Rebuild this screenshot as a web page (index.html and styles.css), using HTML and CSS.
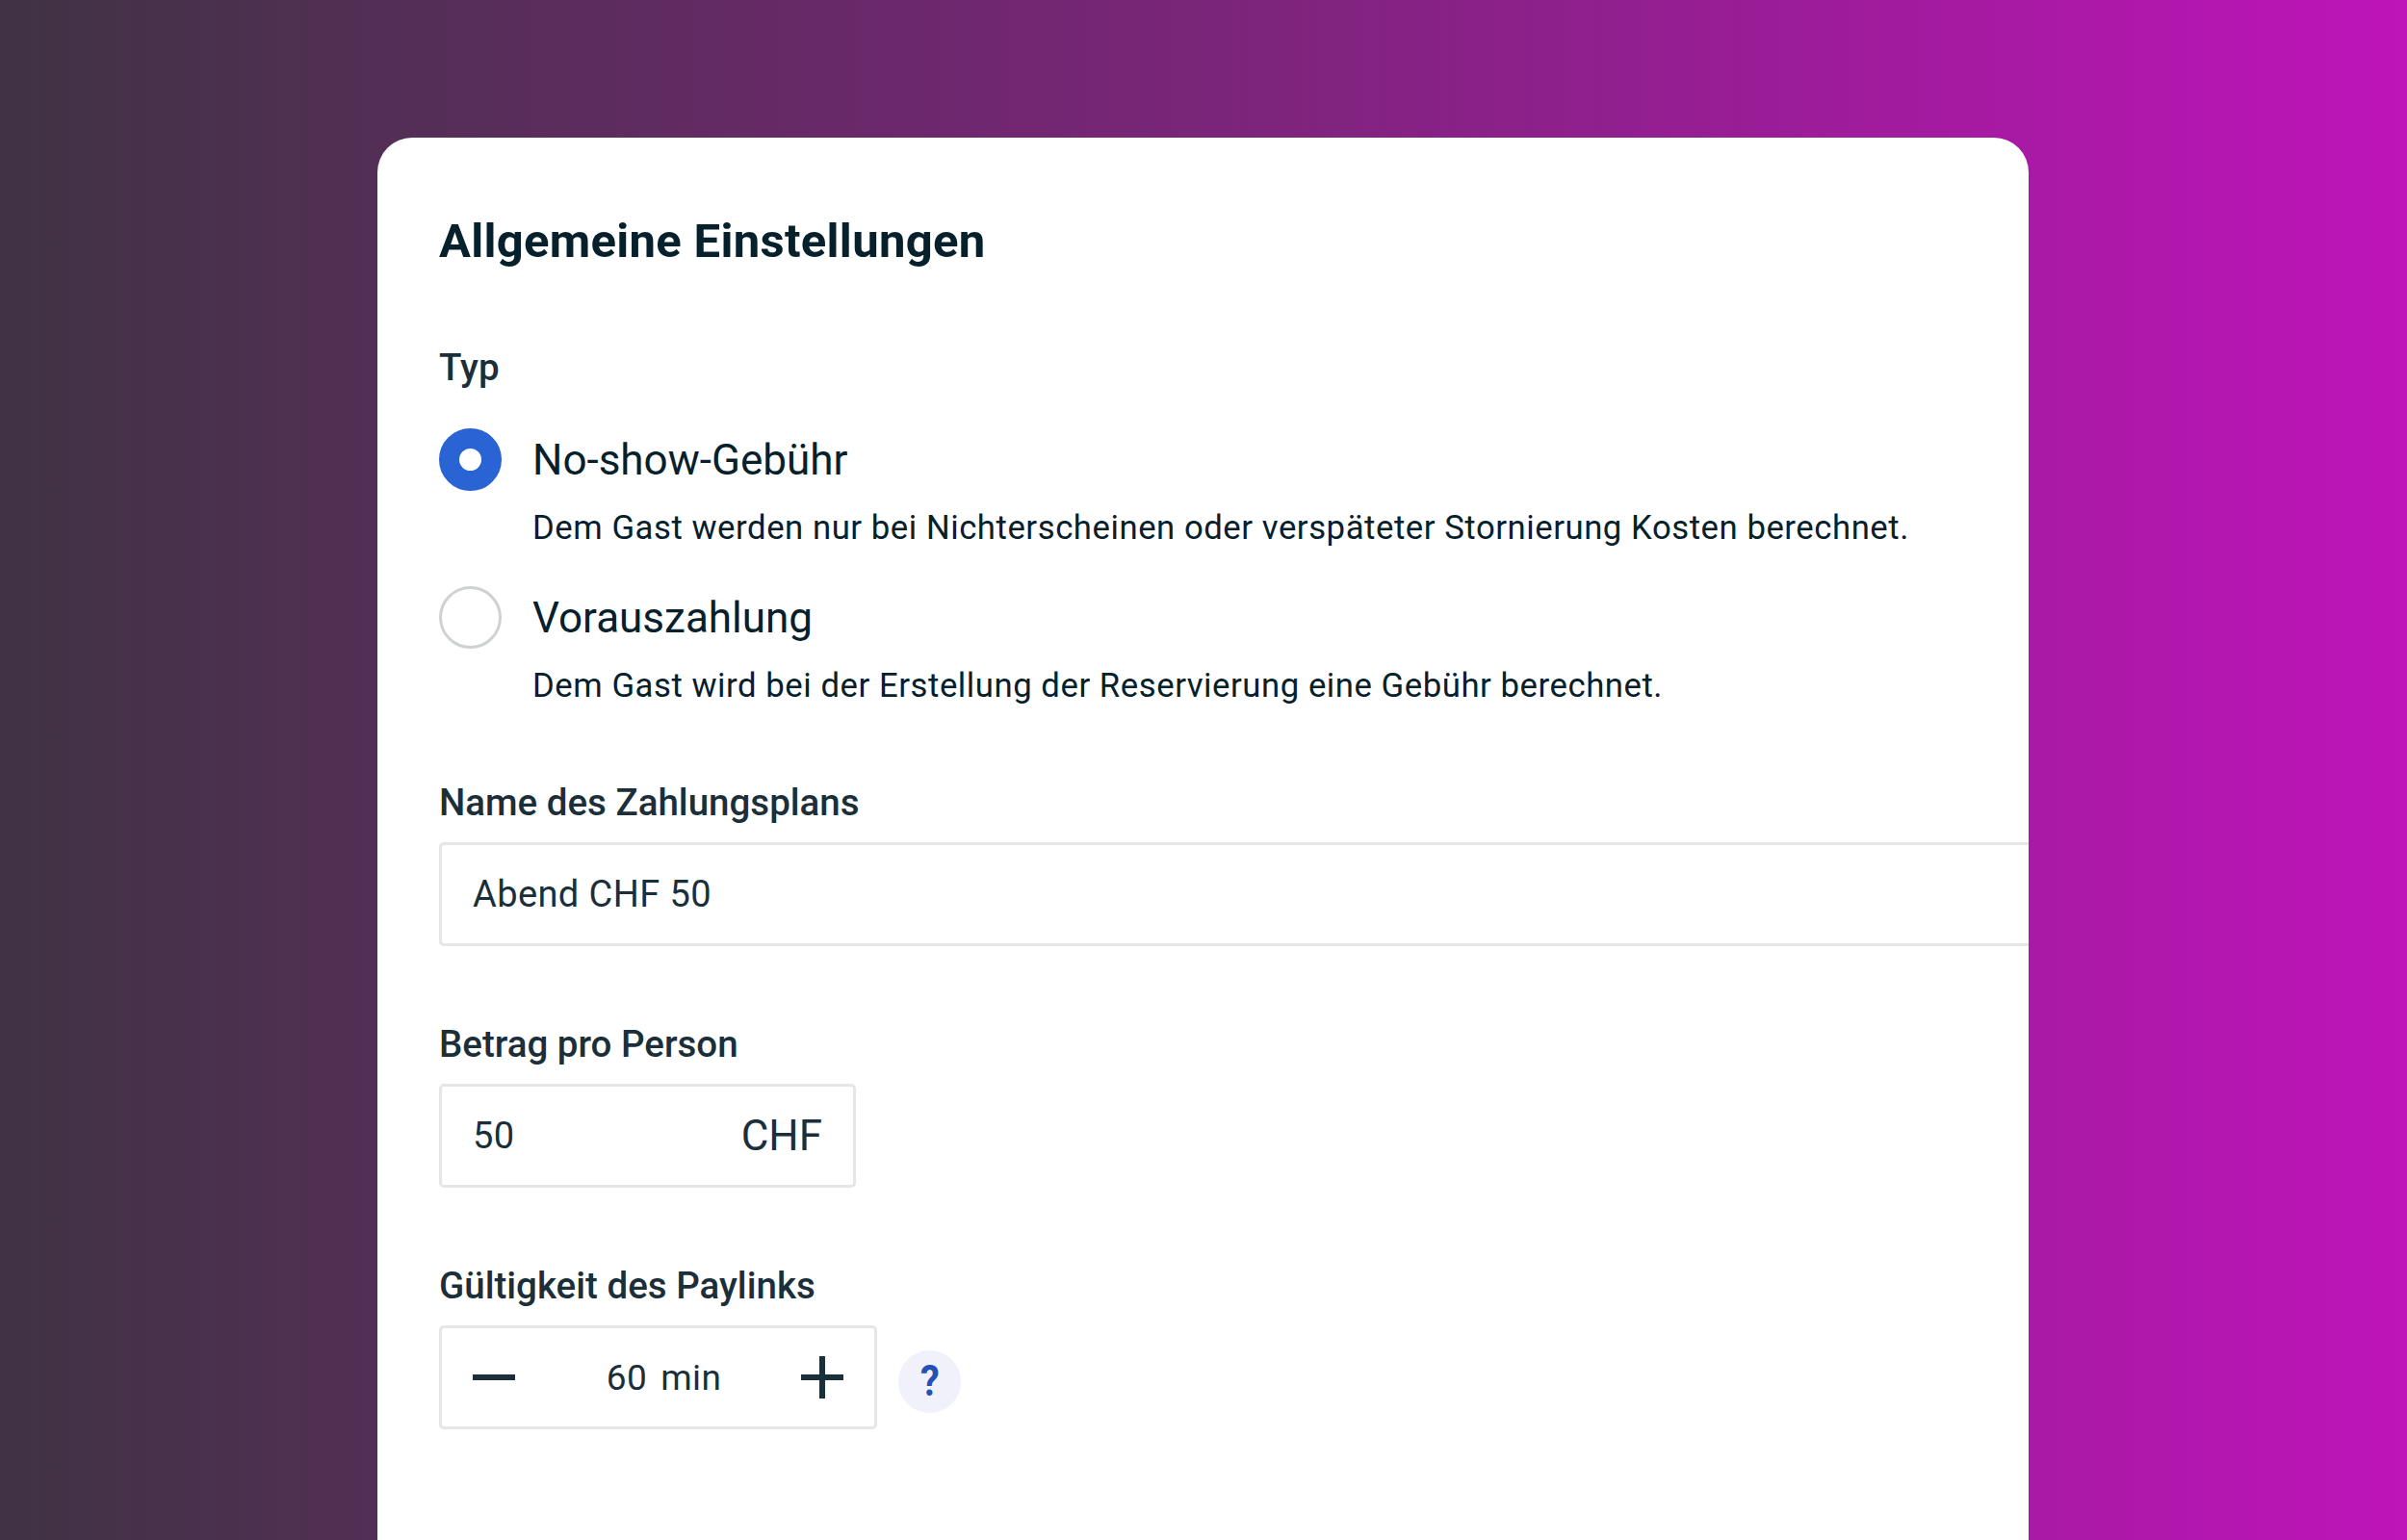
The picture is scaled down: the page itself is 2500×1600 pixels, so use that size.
FILE: index.html
```html
<!DOCTYPE html>
<html lang="de">
<head>
  <meta charset="UTF-8" />
  <title>Allgemeine Einstellungen</title>
  <link rel="stylesheet" href="styles.css">
</head>
<body>
  <div class="card">
    <h2>Allgemeine Einstellungen</h2>

    <div class="type-label">Typ</div>

    <div class="radio-row">
      <span class="radio checked"></span>
      <div class="radio-text">
        <div class="radio-title">No-show-Gebühr</div>
        <div class="radio-desc">Dem Gast werden nur bei Nichterscheinen oder verspäteter Stornierung Kosten berechnet.</div>
      </div>
    </div>
    <div class="radio-row">
      <span class="radio"></span>
      <div class="radio-text">
        <div class="radio-title">Vorauszahlung</div>
        <div class="radio-desc">Dem Gast wird bei der Erstellung der Reservierung eine Gebühr berechnet.</div>
      </div>
    </div>

    <div class="field field-name">
      <label>Name des Zahlungsplans</label>
      <div class="box box-wide">Abend CHF 50</div>
    </div>

    <div class="field">
      <label>Betrag pro Person</label>
      <div class="box box-amount"><span>50</span><span class="unit">CHF</span></div>
    </div>

    <div class="field">
      <label>Gültigkeit des Paylinks</label>
      <div class="stepper-row">
        <div class="box box-stepper">
          <svg class="step-icon" viewBox="0 0 44 44"><path d="M1 22H43" /></svg>
          <span class="step-value">60<span class="step-unit">min</span></span>
          <svg class="step-icon" viewBox="0 0 44 44"><path d="M1 22H43M22 1V43" /></svg>
        </div>
        <span class="help"><span class="help-mark">?</span></span>
      </div>
    </div>
  </div>
</body>
</html>
```

FILE: styles.css
```css
html, body { height: 100%; }
body {
  margin: 0; padding: 143px 0 0 392px;
  box-sizing: border-box; overflow: hidden;
  font-family: Roboto, sans-serif; color: #06202c;
  background: linear-gradient(90deg, #403344 0%, #7a2579 50%, #be14b9 100%);
}
.card {
  width: 1715px; height: 1500px; box-sizing: border-box;
  padding: 78px 0 0 64px; overflow: hidden;
  background: #fff; border-radius: 36px 36px 0 0;
}
h2 {
  margin: 0; font-size: 49px; line-height: 60px; font-weight: 700;
  letter-spacing: 0.3px; color: #06202c;
}
.type-label {
  margin: 79px 0 41px; font-size: 38.5px; line-height: 44px; font-weight: 500;
  color: #1b2f3b;
}
.radio-row { display: flex; gap: 32px; margin-bottom: 40px; }
.radio {
  flex: none; width: 65px; height: 65px; box-sizing: border-box;
  border: 3px solid #cfd2d4; border-radius: 50%;
}
.radio.checked { border: 21px solid #2a63d4; background: #fff; }
.radio-title { padding-top: 1px; font-size: 44px; line-height: 65px; color: #06202c; }
.radio-desc {
  margin-top: 16px; font-size: 34.7px; line-height: 42px;
  letter-spacing: 0.55px; color: #06202c;
}
.field { margin-top: 80px; }
.field-name { margin-top: 79px; }
.field label {
  display: block; margin-bottom: 19px;
  font-size: 38.5px; line-height: 44px; font-weight: 500; color: #1b2f3b;
}
.box {
  display: flex; align-items: center; height: 108px; box-sizing: border-box;
  border: 3px solid #e4e6e7; border-radius: 5px;
  font-size: 38px; color: #1b2f3b; letter-spacing: 0.4px;
}
.box-wide { width: 1800px; padding-left: 32px; }
.box-amount { width: 433px; padding: 0 32px; justify-content: space-between; }
.box-amount .unit { font-size: 44px; letter-spacing: 0; }
.stepper-row { display: flex; align-items: center; gap: 22px; }
.box-stepper { width: 455px; padding: 0 32px; justify-content: space-between; }
.step-icon { width: 44px; height: 44px; fill: none; stroke: #1b2f3b; stroke-width: 6; stroke-linecap: round; }
.step-value { margin-left: 12px; font-size: 37px; }
.step-unit { margin-left: 14px; }
.help {
  display: flex; align-items: center; justify-content: center;
  width: 65px; height: 65px; margin-top: 8px; border-radius: 50%;
  background: #f0f1fa; color: #2450b8; font-size: 44px; font-weight: 700;
}
.help-mark { transform: scaleX(0.9); }
```
